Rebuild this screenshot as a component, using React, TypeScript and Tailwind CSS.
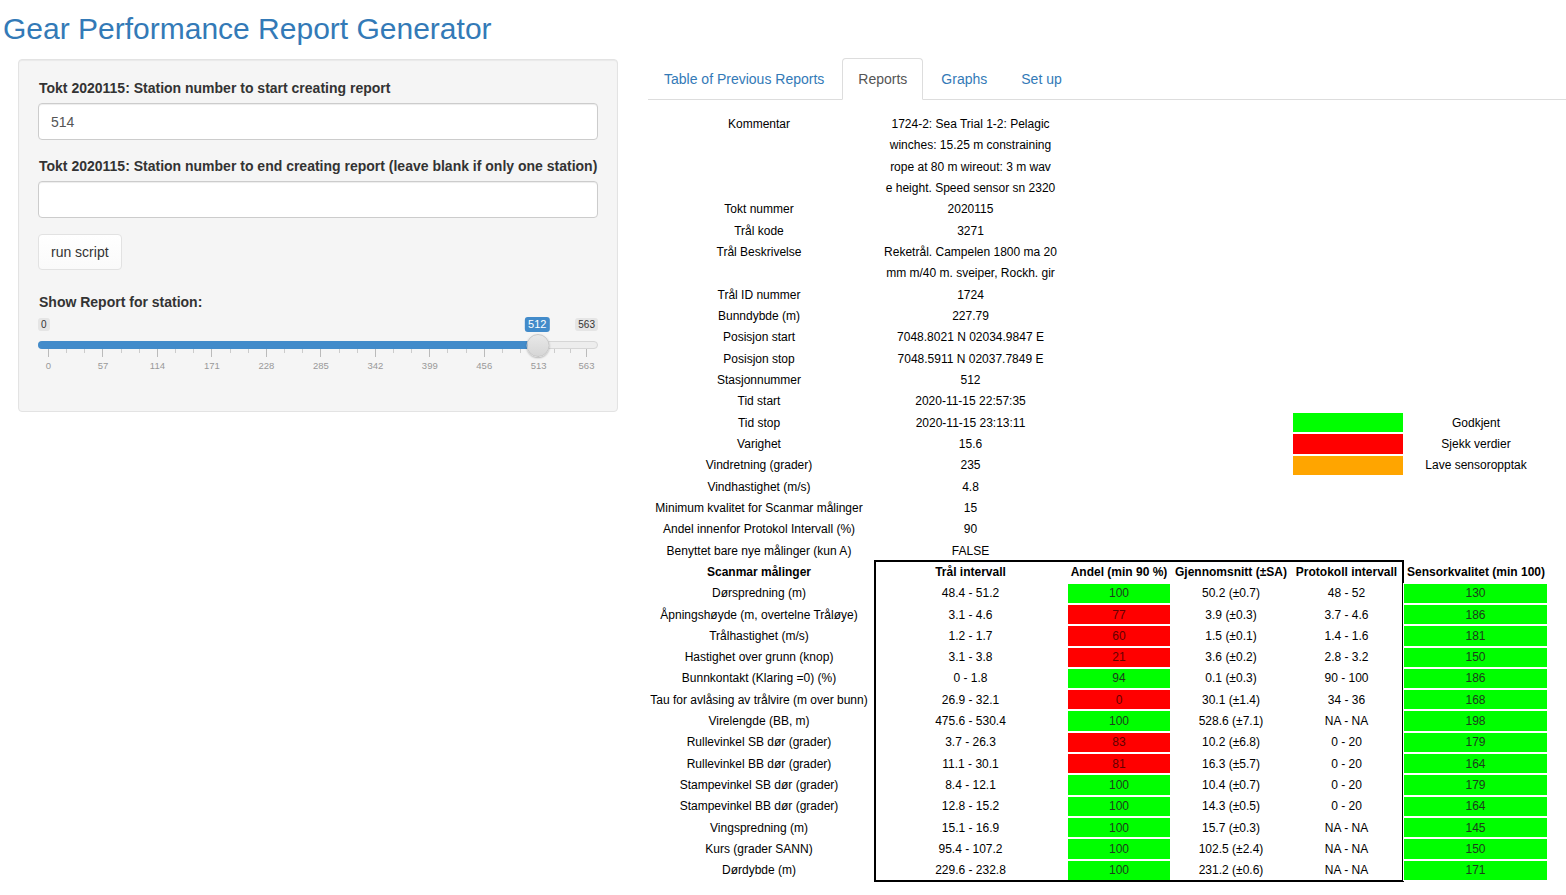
import React from 'react';

const COLS = 'grid grid-cols-[232px_191px_106px_118px_113px_146px]';
const ROW = 'h-[21.34px] flex items-center justify-center whitespace-nowrap';

const info: [string, string][] = [
  ['Kommentar', '1724-2: Sea Trial 1-2: Pelagic'],
  ['', 'winches: 15.25 m constraining'],
  ['', 'rope at 80 m wireout: 3 m wav'],
  ['', 'e height. Speed sensor sn 2320'],
  ['Tokt nummer', '2020115'],
  ['Trål kode', '3271'],
  ['Trål Beskrivelse', 'Reketrål. Campelen 1800 ma 20'],
  ['', 'mm m/40 m. sveiper, Rockh. gir'],
  ['Trål ID nummer', '1724'],
  ['Bunndybde (m)', '227.79'],
  ['Posisjon start', '7048.8021 N 02034.9847 E'],
  ['Posisjon stop', '7048.5911 N 02037.7849 E'],
  ['Stasjonnummer', '512'],
  ['Tid start', '2020-11-15 22:57:35'],
  ['Tid stop', '2020-11-15 23:13:11'],
  ['Varighet', '15.6'],
  ['Vindretning (grader)', '235'],
  ['Vindhastighet (m/s)', '4.8'],
  ['Minimum kvalitet for Scanmar målinger', '15'],
  ['Andel innenfor Protokol Intervall (%)', '90'],
  ['Benyttet bare nye målinger (kun A)', 'FALSE'],
];

const legend: Record<number, { color: string; label: string }> = {
  14: { color: 'bg-[#00ff00]', label: 'Godkjent' },
  15: { color: 'bg-[#ff0000]', label: 'Sjekk verdier' },
  16: { color: 'bg-[#ffa500]', label: 'Lave sensoropptak' },
};

type Meas = [string, string, number, string, string, number];
const meas: Meas[] = [
  ['Dørspredning (m)', '48.4 - 51.2', 100, '50.2 (±0.7)', '48 - 52', 130],
  ['Åpningshøyde (m, overtelne Tråløye)', '3.1 - 4.6', 77, '3.9 (±0.3)', '3.7 - 4.6', 186],
  ['Trålhastighet (m/s)', '1.2 - 1.7', 60, '1.5 (±0.1)', '1.4 - 1.6', 181],
  ['Hastighet over grunn (knop)', '3.1 - 3.8', 21, '3.6 (±0.2)', '2.8 - 3.2', 150],
  ['Bunnkontakt (Klaring =0) (%)', '0 - 1.8', 94, '0.1 (±0.3)', '90 - 100', 186],
  ['Tau for avlåsing av trålvire (m over bunn)', '26.9 - 32.1', 0, '30.1 (±1.4)', '34 - 36', 168],
  ['Virelengde (BB, m)', '475.6 - 530.4', 100, '528.6 (±7.1)', 'NA - NA', 198],
  ['Rullevinkel SB dør (grader)', '3.7 - 26.3', 83, '10.2 (±6.8)', '0 - 20', 179],
  ['Rullevinkel BB dør (grader)', '11.1 - 30.1', 81, '16.3 (±5.7)', '0 - 20', 164],
  ['Stampevinkel SB dør (grader)', '8.4 - 12.1', 100, '10.4 (±0.7)', '0 - 20', 179],
  ['Stampevinkel BB dør (grader)', '12.8 - 15.2', 100, '14.3 (±0.5)', '0 - 20', 164],
  ['Vingspredning (m)', '15.1 - 16.9', 100, '15.7 (±0.3)', 'NA - NA', 145],
  ['Kurs (grader SANN)', '95.4 - 107.2', 100, '102.5 (±2.4)', 'NA - NA', 150],
  ['Dørdybde (m)', '229.6 - 232.8', 100, '231.2 (±0.6)', 'NA - NA', 171],
];

const ticks = [0, 57, 114, 171, 228, 285, 342, 399, 456, 513, 563];
const MAX = 563;
const VALUE = 512;
// slider grid runs 10px .. 548px inside the 559px wide widget
const px = (v: number) => 10 + (v / MAX) * 538;

function Slider() {
  const minor: number[] = [];
  for (let i = 0; i < ticks.length - 1; i++) {
    const a = ticks[i];
    const b = ticks[i + 1];
    minor.push(a + (b - a) / 3, a + (2 * (b - a)) / 3);
  }
  const pos = px(VALUE);
  return (
    <div className="relative h-[70px] w-full">
      <span className="absolute left-0 top-[6px] h-[13px] rounded-[3px] bg-[#e5e5e5] px-[3px] text-[10px] leading-[13px] text-[#333]">0</span>
      <span className="absolute right-0 top-[6px] h-[13px] rounded-[3px] bg-[#e5e5e5] px-[3px] text-[10px] leading-[13px] text-[#333]">563</span>
      <span
        className="absolute top-[5px] h-[15px] -translate-x-1/2 rounded-[3px] bg-[#428bca] px-[3px] text-[11px] leading-[15px] text-white"
        style={{ left: pos }}
      >
        512
      </span>
      <div className="absolute left-0 right-0 top-[29px] h-[8px] rounded-full border border-[#d6d6d6] bg-[#ededed]" />
      <div className="absolute left-0 top-[29px] h-[8px] rounded-l-full bg-[#428bca]" style={{ width: pos }} />
      {ticks.map((t) => (
        <React.Fragment key={t}>
          <div className="absolute top-[37px] h-[8px] w-px bg-[#bbb]" style={{ left: px(t) }} />
          <span
            className="absolute top-[49px] -translate-x-1/2 text-[9.5px] leading-[10px] text-[#999]"
            style={{ left: px(t) + 0.5 }}
          >
            {t}
          </span>
        </React.Fragment>
      ))}
      {minor.map((m, i) => (
        <div key={i} className="absolute top-[37px] h-[4px] w-px bg-[#ccc]" style={{ left: px(m) }} />
      ))}
      <div
        className="absolute top-[22px] h-[23px] w-[23px] -translate-x-1/2 rounded-full border border-[#c8c8c8] bg-gradient-to-b from-[#e8e8e8] to-[#d6d6d6] shadow-[0_1px_2px_rgba(0,0,0,0.25)]"
        style={{ left: pos + 0.5 }}
      />
    </div>
  );
}

function Sidebar() {
  return (
    <div className="mt-px h-[353px] w-[600px] rounded border border-[#e3e3e3] bg-[#f5f5f5] px-[19px] pt-[18px] shadow-[inset_0_1px_1px_rgba(0,0,0,0.05)]">
      <label className="mb-[5px] block pl-px text-[14px] font-bold leading-[20px] text-[#333]">
        Tokt 2020115: Station number to start creating report
      </label>
      <div className="mb-[16px] flex h-[37px] items-center rounded border border-[#ccc] bg-white px-[12px] pt-px text-[14px] text-[#555] shadow-[inset_0_1px_1px_rgba(0,0,0,0.075)]">
        514
      </div>
      <label className="mb-[5px] block pl-px text-[14px] font-bold leading-[20px] text-[#333]">
        Tokt 2020115: Station number to end creating report (leave blank if only one station)
      </label>
      <div className="mb-[16px] h-[37px] rounded border border-[#ccc] bg-white shadow-[inset_0_1px_1px_rgba(0,0,0,0.075)]" />
      <button className="mb-[22px] flex h-[36px] items-center whitespace-nowrap rounded border border-[#e2e2e2] bg-gradient-to-b from-white to-[#fafafa] px-[12px] text-[14px] text-[#333]">
        run script
      </button>
      <label className="block pl-px text-[14px] font-bold leading-[20px] text-[#333]">Show Report for station:</label>
      <Slider />
    </div>
  );
}

function Tabs() {
  const tabs = ['Table of Previous Reports', 'Reports', 'Graphs', 'Set up'];
  return (
    <ul className="ml-[5px] flex border-b border-[#ddd]">
      {tabs.map((t) => (
        <li key={t} className="-mb-px mr-[2px]">
          {t === 'Reports' ? (
            <span className="block rounded-t border border-[#ddd] border-b-transparent bg-white px-[15px] py-[10px] text-[14px] leading-[20px] text-[#555]">
              {t}
            </span>
          ) : (
            <span className="block rounded-t border border-transparent px-[15px] py-[10px] text-[14px] leading-[20px] text-[#337ab7]">
              {t}
            </span>
          )}
        </li>
      ))}
    </ul>
  );
}

function Fill({ ok, children, sensor }: { ok: boolean; children: React.ReactNode; sensor?: boolean }) {
  return (
    <div
      className={
        (sensor ? 'border-l border-r-2 ' : 'border-x-2 ') +
        'flex h-[21.34px] items-center justify-center border-y border-white ' +
        (ok ? 'bg-[#00ff00] text-[#1c3d1c]' : 'bg-[#ff0000] text-[#640000]')
      }
    >
      {children}
    </div>
  );
}

function Report() {
  return (
    <div className="mt-[13.3px] text-[12px] leading-none text-black">
      <div className={COLS}>
        {info.map(([k, v], i) => (
          <React.Fragment key={i}>
            <div className={ROW}>{k}</div>
            <div className={ROW}>{v}</div>
            <div />
            <div />
            {legend[i] ? (
              <div className={'h-[21.34px] border-l-[3px] border-y border-white ' + legend[i].color} />
            ) : (
              <div />
            )}
            <div className={ROW}>{legend[i] ? legend[i].label : ''}</div>
          </React.Fragment>
        ))}
      </div>
      <div className="flex">
        <div className="w-[232px]">
          <div className={ROW + ' font-bold'}>Scanmar målinger</div>
          {meas.map((m) => (
            <div key={m[0]} className={ROW}>
              {m[0]}
            </div>
          ))}
        </div>
        <div className="grid w-[528px] grid-cols-[191px_106px_118px_113px] outline-2 outline-black -outline-offset-1">
          <div className={ROW + ' font-bold'}>Trål intervall</div>
          <div className={ROW + ' font-bold'}>Andel (min 90 %)</div>
          <div className={ROW + ' font-bold'}>Gjennomsnitt (±SA)</div>
          <div className={ROW + ' font-bold'}>Protokoll intervall</div>
          {meas.map((m) => (
            <React.Fragment key={m[0]}>
              <div className={ROW}>{m[1]}</div>
              <Fill ok={m[2] >= 90}>{m[2]}</Fill>
              <div className={ROW}>{m[3]}</div>
              <div className={ROW}>{m[4]}</div>
            </React.Fragment>
          ))}
        </div>
        <div className="w-[146px]">
          <div className={ROW + ' font-bold'}>Sensorkvalitet (min 100)</div>
          {meas.map((m) => (
            <Fill key={m[0]} ok={m[5] >= 100} sensor>
              {m[5]}
            </Fill>
          ))}
        </div>
      </div>
    </div>
  );
}

export default function App() {
  return (
    <div className="min-h-[895px] w-[1566px] bg-white font-['Liberation_Sans',Arial,sans-serif] text-[#333]">
      <h2 className="h-[45px] pl-[3px] pt-[12px] text-[30px] leading-[33px] text-[#337ab7]">
        Gear Performance Report Generator
      </h2>
      <div className="mt-[13px] flex">
        <div className="ml-[18px]">
          <Sidebar />
        </div>
        <div className="ml-[25px] w-[923px]">
          <Tabs />
          <Report />
        </div>
      </div>
    </div>
  );
}
